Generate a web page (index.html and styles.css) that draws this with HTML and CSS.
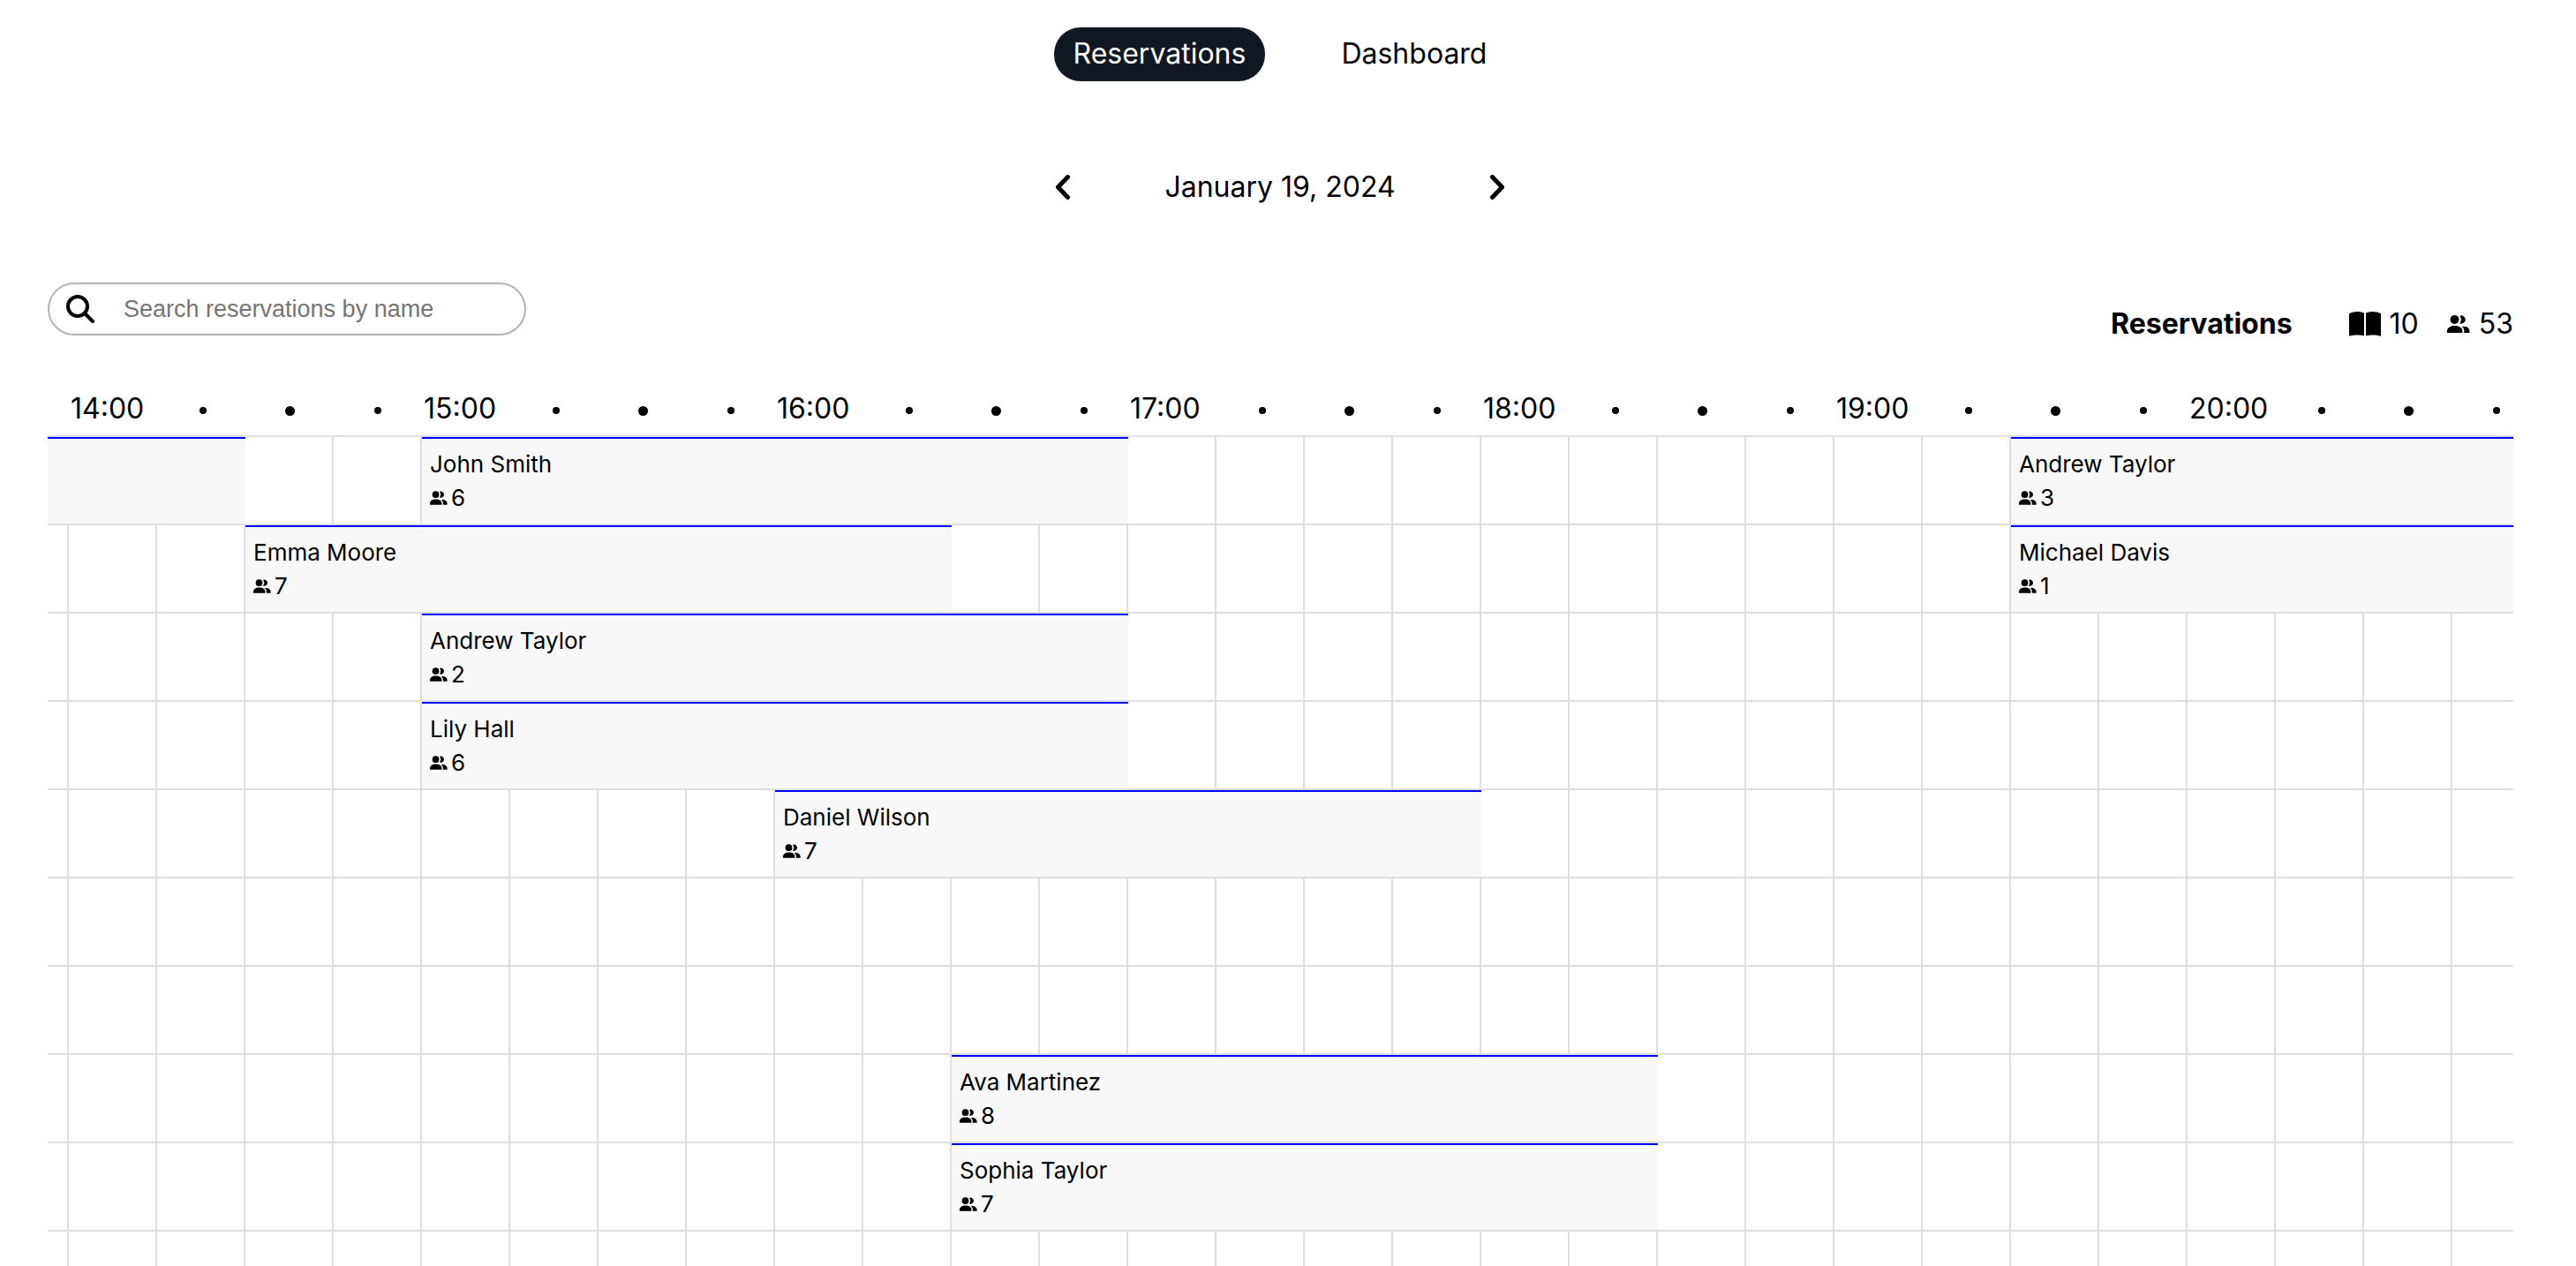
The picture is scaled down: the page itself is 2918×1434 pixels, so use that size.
FILE: index.html
```html
<!DOCTYPE html>
<html lang="en">
<head>
<meta charset="utf-8">
<meta name="viewport" content="width=device-width, initial-scale=1">
<title>Reservations</title>
<link rel="stylesheet" href="styles.css">
</head>
<body>
<svg class="sprite" aria-hidden="true">
  <symbol id="people" viewBox="0 0 26 20">
    <circle cx="8.500" cy="5" r="5"/>
    <path d="M14.300 9.200a7 7 0 0 0 0-8.400A4.600 4.600 0 1 1 14.300 9.200z"/>
    <path d="M0 20v-2c0-3.500 3.500-6 8.700-6s8.700 2.500 8.700 6v2z"/>
    <path d="M19.300 20v-2.200c0-2-.9-3.700-2.600-5C22 12 25.500 14.500 25.500 18v2z"/>
  </symbol>
  <symbol id="book" viewBox="0 0 36 28">
    <path d="M17 1.600v26c-4-1.400-12-1.400-17 .2V2.200C5-.6 13-.6 17 1.600zM19 1.600v26c4-1.400 12-1.400 17 .2V2.200C31-.6 23-.6 19 1.600z"/>
  </symbol>
</svg>
<header class="top">
  <nav class="tabs">
    <a class="tab tab-active" href="#reservations">Reservations</a>
    <a class="tab" href="#dashboard">Dashboard</a>
  </nav>
  <div class="date">
    <button class="step" type="button" aria-label="Previous day"><svg viewBox="0 0 16 28"><path d="M13.500 2.500 2.500 14l11 11.500"/></svg></button>
    <span>January 19, 2024</span>
    <button class="step" type="button" aria-label="Next day"><svg viewBox="0 0 16 28"><path d="m2.500 2.500 11 11.500-11 11.500"/></svg></button>
  </div>
</header>
<main class="content">
  <div class="toolbar">
    <label class="search">
      <svg viewBox="0 0 32 32" aria-hidden="true"><circle cx="13" cy="13" r="11"/><path d="m21 21 9 9"/></svg>
      <input type="search" placeholder="Search reservations by name" aria-label="Search reservations by name">
    </label>
    <div class="summary">
      <h1>Reservations</h1>
      <span class="stat"><svg class="book"><use href="#book"/></svg>10</span>
      <span class="stat"><svg class="people"><use href="#people"/></svg>53</span>
    </div>
  </div>
  <div class="timeline">
    <div class="hours" id="hours"></div>
    <div class="rows" id="rows"></div>
  </div>
</main>
<script src="timeline.js"></script>
</body>
</html>
```
FILE: styles.css
```css
* { box-sizing: border-box; }
body {
  margin: 0;
  padding-right: 18px;
  background: #fff;
  color: #000;
  font: 32px/38px Inter, "Liberation Sans", sans-serif;
}
.sprite { display: none; }
.top {
  display: flex;
  flex-direction: column;
  align-items: center;
  padding-top: 31px;
}
.tabs { display: flex; gap: 64px; }
.tab {
  padding: 11px 22px 12px;
  border-radius: 30px;
  color: #000;
  text-decoration: none;
}
.tab-active { background: #111822; color: #fff; }
.date {
  display: flex;
  align-items: center;
  justify-content: space-between;
  width: 508px;
  margin-top: 101px;
}
.step {
  display: flex;
  padding: 0;
  border: 0;
  background: none;
}
.step svg {
  width: 16px;
  height: 28px;
  fill: none;
  stroke: #000;
  stroke-width: 5;
  stroke-linecap: round;
  stroke-linejoin: round;
}
.content { padding: 89px 53px 0 54px; }
.toolbar {
  display: flex;
  justify-content: space-between;
  align-items: flex-start;
}
.search {
  display: flex;
  align-items: center;
  gap: 33px;
  width: 542px;
  height: 60px;
  padding: 0 19px;
  border: 2px solid #b3b3b3;
  border-radius: 30px;
}
.search svg {
  flex: none;
  width: 32px;
  height: 32px;
  fill: none;
  stroke: #000;
  stroke-width: 4;
  stroke-linecap: round;
}
.search input {
  flex: 1;
  min-width: 0;
  padding: 0;
  border: 0;
  outline: 0;
  background: none;
  font: 27px/32px "Liberation Sans", sans-serif;
}
.search input::placeholder { color: #757575; }
.summary {
  display: flex;
  align-items: center;
  gap: 32px;
  padding-top: 28px;
}
.summary h1 {
  margin: 0 32px 0 0;
  font-size: 32px;
  line-height: 38px;
  font-weight: 700;
}
.stat { display: flex; align-items: center; gap: 10px; }
.book { width: 36px; height: 28px; }
.people { width: 26px; height: 20px; }
.timeline { margin-top: 58px; overflow: hidden; }
.hours { display: flex; margin-left: 24px; }
.hour {
  display: grid;
  grid-template-columns: 102px repeat(3, 99px);
  flex: none;
  align-items: center;
  justify-items: center;
  width: 400px;
  padding-bottom: 11px;
}
.hour time { justify-self: start; padding-left: 2px; }
.dot {
  width: 8px;
  height: 8px;
  margin-top: 4px;
  border-radius: 50%;
  background: #000;
}
.dot-half { width: 11px; height: 11px; }
.rows { border-top: 2px solid #dfdfdf; }
.row {
  display: grid;
  grid-template-columns: 24px repeat(60, 100px);
  height: 100px;
  border-bottom: 2px solid #dfdfdf;
  background: repeating-linear-gradient(90deg, #dfdfdf 0 2px, #fff 2px 100px) 22px 0;
  background-repeat: no-repeat;
}
.booking {
  grid-row: 1;
  height: 98px;
  padding: 14px 9px;
  border-top: 2px solid #00f;
  background: #f8f8f8;
  font-size: 26px;
  line-height: 30px;
}
.booking p { margin: 0; }
.booking .guests {
  display: flex;
  align-items: center;
  gap: 4px;
  margin-top: 8px;
}
.guests svg { width: 20px; height: 16px; }
```
FILE: timeline.js
```javascript
const FIRST_HOUR = 14;

// Each row is a table; start and span count quarter-hour columns.
const tables = [
  [{ start: 0, span: 3 }, { start: 4, span: 8, name: 'John Smith', guests: 6 }, { start: 22, span: 8, name: 'Andrew Taylor', guests: 3 }],
  [{ start: 2, span: 8, name: 'Emma Moore', guests: 7 }, { start: 22, span: 8, name: 'Michael Davis', guests: 1 }],
  [{ start: 4, span: 8, name: 'Andrew Taylor', guests: 2 }],
  [{ start: 4, span: 8, name: 'Lily Hall', guests: 6 }],
  [{ start: 8, span: 8, name: 'Daniel Wilson', guests: 7 }],
  [],
  [],
  [{ start: 10, span: 8, name: 'Ava Martinez', guests: 8 }],
  [{ start: 10, span: 8, name: 'Sophia Taylor', guests: 7 }],
  []
];

document.getElementById('hours').innerHTML = Array.from({ length: 7 }, (_, i) =>
  `<div class="hour"><time>${FIRST_HOUR + i}:00</time><i class="dot"></i><i class="dot dot-half"></i><i class="dot"></i></div>`
).join('');

// Column line 1 is the partly scrolled quarter before the first hour.
document.getElementById('rows').innerHTML = tables.map(list =>
  `<div class="row">${list.map(b => {
    const line = b.start === 0 ? 1 : b.start + 2;
    const body = b.name
      ? `<p>${b.name}</p><p class="guests"><svg><use href="#people"/></svg>${b.guests}</p>`
      : '';
    return `<article class="booking" style="grid-column: ${line} / span ${b.span}">${body}</article>`;
  }).join('')}</div>`
).join('');
```
